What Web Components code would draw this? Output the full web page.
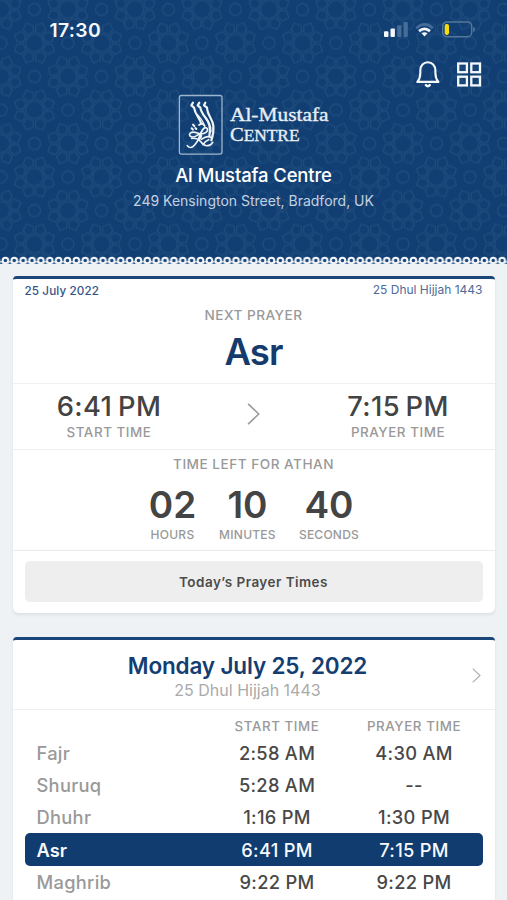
<!DOCTYPE html>
<html lang="en">
<head>
<meta charset="utf-8">
<title>Al Mustafa Centre</title>
<style>
html,body{margin:0;height:900px;overflow:hidden;background:#eef2f5}
body{font-family:Inter,"Liberation Sans",sans-serif;color:#444}
</style>
</head>
<body>
<prayer-app></prayer-app>
<script>
const define=(name,html)=>customElements.define(name,class extends HTMLElement{
  constructor(){super();this.attachShadow({mode:'open'})}
  connectedCallback(){
    const t=document.createElement('template');
    t.innerHTML=typeof html==='function'?html(this):html;
    this.shadowRoot.replaceChildren(t.content.cloneNode(true));
  }
});

/* Geometric lattice: a large circle ringed by eight small cells and a star outline */
const rosette=(cx,cy)=>{
  let s=`<circle cx="${cx}" cy="${cy}" r="8.8"/>`;
  const p=(r,b)=>`${(cx+r*Math.cos(b)).toFixed(1)} ${(cy+r*Math.sin(b)).toFixed(1)}`;
  for(let i=0;i<8;i++){
    const a=(i+.5)*Math.PI/4;
    s+=`<path d="M${p(11,a-.3)}L${p(17.5,a-.32)}L${p(21.5,a)}L${p(17.5,a+.32)}L${p(11,a+.3)}Z"/>`;
  }
  return s;
};
define('girih-pattern',`<style>:host{display:block;position:absolute;inset:0;overflow:hidden}svg{display:block;width:100%;height:100%}</style>
<svg aria-hidden="true"><defs><pattern id="g" width="67" height="67" patternUnits="userSpaceOnUse" patternTransform="translate(1 9.5)">
<g fill="none" stroke="#4a7ba9" stroke-opacity=".2" stroke-width="1.3" stroke-linejoin="round">
${rosette(0,0)}${rosette(67,0)}${rosette(0,67)}${rosette(67,67)}${rosette(33.5,33.5)}
<circle cx="33.5" cy="0" r="6"/><circle cx="33.5" cy="67" r="6"/><circle cx="0" cy="33.5" r="6"/><circle cx="67" cy="33.5" r="6"/>
</g></pattern></defs><rect width="100%" height="100%" fill="#123f73"/><rect width="100%" height="100%" fill="url(#g)"/></svg>`);

define('scallop-edge',`<style>:host{display:block;position:absolute;left:0;right:0;bottom:0;height:9px}svg{display:block}</style>
<svg width="507" height="9" aria-hidden="true"><defs><pattern id="s" width="8.87" height="9" patternUnits="userSpaceOnUse" patternTransform="translate(1 0)">
<path d="M0 7.8H8.87V9H0Z" fill="#eef2f5"/><path d="M-2 7.4Q0 4 2 7.4M6.87 7.4Q8.87 4 10.87 7.4" fill="none" stroke="#dfe7ee" stroke-width="1.3"/><circle cx="4.4" cy="4.5" r="2.8" fill="#1b4778" stroke="#f4f7fa" stroke-width="2"/></pattern></defs><rect width="507" height="9" fill="url(#s)"/></svg>`);

define('status-bar',`<style>
:host{display:flex;position:relative;justify-content:space-between;align-items:center;height:20px;padding:20px 31px 0 49.5px;color:#f5f8fb}
.t{font-size:19.3px;font-weight:600;line-height:20px;letter-spacing:.35px}svg{display:block}</style>
<span class="t">17:30</span>
<svg width="92" height="20" viewBox="384 20 92 20" aria-hidden="true">
<g fill="#f5f8fb"><rect x="384" y="31.3" width="4.4" height="5.7" rx="1"/><rect x="390.5" y="28.5" width="4.4" height="8.5" rx="1"/></g>
<g fill="#456d98"><rect x="397.2" y="25.3" width="4.2" height="11.7" rx="1"/><rect x="403.6" y="22" width="4.2" height="15" rx="1"/></g>
<g fill="none" stroke-width="2.7"><path d="M416.3 28.2Q424.5 20.6 432.8 28.2" stroke="#456d98"/><path d="M419 31.1Q424.5 26.5 430 31.1" stroke="#f5f8fb"/></g>
<path d="M421.5 33.3Q424.6 31.2 427.5 33.3L424.5 36.6Z" fill="#f5f8fb"/>
<rect x="442.7" y="22" width="29" height="14.8" rx="4.2" fill="none" stroke="#547899" stroke-width="1.4"/><path d="M473.2 27v5q1.8-.5 1.8-2.5t-1.8-2.5Z" fill="#547899"/>
<rect x="444.7" y="24.1" width="4.3" height="10.8" rx="1.8" fill="#f6db13"/></svg>`);

define('tool-icons',`<style>:host{display:flex;position:relative;justify-content:flex-end;height:28px;padding:20px 25px 0 0}svg{display:block}</style>
<svg width="67" height="28" viewBox="415 60 67 28" fill="none" stroke="#f5f8fb" stroke-width="2.1" stroke-linejoin="round" stroke-linecap="round" aria-hidden="true">
<path d="M417.3 81.9Q420.3 78.5 420.3 73V70.6C420.3 65.5 423.6 62.3 427.8 62.3S435.4 65.5 435.4 70.6V73Q435.4 78.5 438.4 81.9Z"/><path d="M425.9 85.2Q427.8 87.2 429.7 85.2" stroke-width="2.5"/>
<g stroke-width="2.3" stroke-linejoin="miter"><rect x="458.2" y="63.5" width="8.7" height="8.7"/><rect x="471.3" y="63.5" width="8.7" height="8.7"/><rect x="458.2" y="76.7" width="8.7" height="8.7"/><rect x="471.3" y="76.7" width="8.7" height="8.7"/></g></svg>`);

define('centre-logo',`<style>:host{display:block;position:relative;width:152px;height:62px;margin:6px 0 0 178px}svg{display:block}text{font-family:"Liberation Serif",serif;fill:#e9eff6;stroke:#e9eff6;stroke-width:.35}</style>
<svg width="152" height="62" viewBox="178 94 152 62">
<rect x="179.4" y="95.5" width="42.6" height="58.6" rx="2" fill="none" stroke="#9db5cd" stroke-width="1.3"/>
<g transform="translate(165 85) scale(.3333)" fill="none" stroke="#eff4f9" stroke-linecap="round" stroke-linejoin="round">
<path d="M84 53L79 61L87 68C90 88 103 98 109 116M103 53L98 61L106 68C109 90 128 98 133 121Q137 136 133 154M121 53L117 61L126 68C127 91 143 102 145 122Q147 145 139 166" stroke-width="6.5"/>
<path d="M94 86Q113 103 119 124M115 90Q138 110 138 140" stroke-width="4"/>
<path d="M67 182Q77 194 89 180T105 150Q118 119 127 131C131 144 108 150 97 144C78 136 69 148 76 154C91 163 99 143 107 148Q114 155 99 165" stroke-width="5"/>
<path d="M80 160Q98 158 108 171T128 182Q138 181 143 172M109 163Q127 150 139 158M114 179Q120 168 131 164M102 120Q112 112 119 122" stroke-width="5"/>
<path d="M84 119L88 123M80 130L84 134M91 129L94 132" stroke-width="6"/></g>
<text x="230" y="121.3" font-size="19.5" textLength="98.5" lengthAdjust="spacingAndGlyphs">Al-Mustafa</text>
<text x="230" y="140.9" font-size="19" textLength="69.5" lengthAdjust="spacingAndGlyphs">C<tspan font-size="16">ENTRE</tspan></text></svg>`);

define('app-header',`<style>:host{display:block;position:relative;height:265px;color:#fff;text-align:center}
h1,p{position:relative;margin:0}h1{font-size:18.5px;font-weight:500;line-height:24px;margin-top:7px;letter-spacing:-.15px}
p{font-size:14px;line-height:20px;margin-top:3.6px;color:#c3d1e0;letter-spacing:0}</style>
<girih-pattern></girih-pattern><status-bar></status-bar><tool-icons></tool-icons><centre-logo></centre-logo>
<h1>Al Mustafa Centre</h1><p>249 Kensington Street, Bradford, UK</p><scallop-edge></scallop-edge>`);

define('app-card',`<style>:host{display:block;box-sizing:border-box;margin:0 12.5px;background:#fff;border-top:3px solid #1b467a;border-radius:4px 4px 6px 6px;box-shadow:0 2px 3px #d2d8dcaa}</style><slot></slot>`);

define('chevron-icon',e=>`<style>:host{display:block}svg{display:block}</style><svg width="14" height="24" style="height:${e.getAttribute('size')}px;width:${e.getAttribute('size')*.6}px" viewBox="0 0 14 24" fill="none" stroke="currentColor" stroke-width="1.7" aria-hidden="true"><path d="M1 1L12.6 12L1 23"/></svg>`);

define('time-block',`<style>:host{display:grid;justify-items:center;grid-template-rows:28px 24px;align-items:center}
b{font-size:27.3px;font-weight:500;letter-spacing:.4px;word-spacing:-2px;color:#434343}span{font-size:13.4px;font-weight:500;letter-spacing:.55px;color:#999}</style><b><slot name="value"></slot></b><span><slot></slot></span>`);

define('count-unit',`<style>:host{display:grid;justify-items:center;grid-template-rows:43px 17px;align-items:center}
b{font-size:37px;font-weight:600;letter-spacing:0;color:#444}span{font-size:12px;font-weight:500;letter-spacing:.25px;color:#999}</style><b><slot name="value"></slot></b><span><slot></slot></span>`);

define('next-prayer',`<style>:host{display:block}
app-card{height:337px}
.dates{display:flex;justify-content:space-between;padding:0 12px;height:23px;align-items:center;font-size:12px;color:#4f6a97}
.dates b{font-size:11.7px;font-weight:500;color:#345488;letter-spacing:.1px}.dates span{line-height:14px;margin-top:-1px}
.cap{font-size:13.6px;font-weight:500;letter-spacing:.5px;color:#999;text-align:center}
.name{font-size:36.5px;font-weight:600;line-height:46px;color:#143b6c;text-align:center;letter-spacing:-.9px}
.intro{box-sizing:border-box;height:105px;border-bottom:1px solid #edf0f1}.intro .cap{line-height:26px;height:26px}.name{padding-top:1px}
.times{box-sizing:border-box;height:66px;display:grid;grid-template-columns:193px 1fr 193px;justify-items:center;align-items:start;border-bottom:1px solid #edf0f1;padding-top:8px}
chevron-icon{color:#999;padding-top:11px}
.count{box-sizing:border-box;height:101px;border-bottom:1px solid #e9ecee}.count .cap{line-height:29px}
.units{display:grid;grid-template-columns:75px 75px 88px;margin-left:122.5px;padding-top:4px}
.action{padding:10px 12px}
button{display:block;width:100%;height:41px;border:0;border-radius:5px;background:#eee;font:600 13.5px Inter,"Liberation Sans",sans-serif;color:#4b4b4b;letter-spacing:.46px}</style>
<app-card><div class="intro"><div class="dates"><b>25 July 2022</b><span>25 Dhul Hijjah 1443</span></div><div class="cap">NEXT PRAYER</div><div class="name">Asr</div></div>
<div class="times"><time-block><span slot="value">6:41 PM</span>START TIME</time-block><chevron-icon size="22"></chevron-icon><time-block><span slot="value">7:15 PM</span>PRAYER TIME</time-block></div>
<div class="count"><div class="cap">TIME LEFT FOR ATHAN</div><div class="units"><count-unit><span slot="value">02</span>HOURS</count-unit><count-unit><span slot="value">10</span>MINUTES</count-unit><count-unit><span slot="value">40</span>SECONDS</count-unit></div></div>
<div class="action"><button>Today’s Prayer Times</button></div></app-card>`);

define('prayer-row',`<style>:host{display:grid;grid-template-columns:184px 137px 137px;height:32.3px;align-items:center;text-align:center;border-radius:5px;font-size:18.3px;font-weight:500;letter-spacing:.3px;color:#484848}
.n{text-align:left;padding-left:12px;color:#999}
:host([active]){background:#113c70;color:#f7f9fc}:host([active]) .n{color:#f7f9fc;font-weight:600;letter-spacing:0}</style><span class="n"><slot></slot></span><span><slot name="start"></slot></span><span><slot name="prayer"></slot></span>`);

define('day-times',()=>`<style>:host{display:block;margin-top:24px}
app-card{height:300px}
header{box-sizing:border-box;position:relative;height:70px;padding:12px 12px 0 0;text-align:center;border-bottom:1px solid #edf0f1}
h2{margin:0;font-size:22.5px;line-height:28px;font-weight:600;color:#143e72;letter-spacing:-.15px}
header p{margin:0;font-size:16px;line-height:21px;color:#aaa;font-weight:400}
chevron-icon{position:absolute;right:14px;top:28px;color:#aaa}
.head{display:grid;grid-template-columns:184px 137px 137px;text-align:center;font-size:13.3px;font-weight:500;letter-spacing:.6px;color:#999;height:26.6px;line-height:32px}
.list{padding:0 12px 0}</style>
<app-card><header><h2>Monday July 25, 2022</h2><p>25 Dhul Hijjah 1443</p><chevron-icon size="15"></chevron-icon></header>
<div class="list"><div class="head"><span></span><span>START TIME</span><span>PRAYER TIME</span></div>
${[['Fajr','2:58 AM','4:30 AM'],['Shuruq','5:28 AM','--'],['Dhuhr','1:16 PM','1:30 PM'],['Asr','6:41 PM','7:15 PM',1],['Maghrib','9:22 PM','9:22 PM']].map(r=>`<prayer-row${r[3]?' active':''}>${r[0]}<span slot="start">${r[1]}</span><span slot="prayer">${r[2]}</span></prayer-row>`).join('')}</div></app-card>`);

define('prayer-app',`<style>:host{display:block;width:507px;height:900px;overflow:hidden;background:#eef2f5}next-prayer{padding-top:11px}</style><app-header></app-header><next-prayer></next-prayer><day-times></day-times>`);
</script>
</body>
</html>
